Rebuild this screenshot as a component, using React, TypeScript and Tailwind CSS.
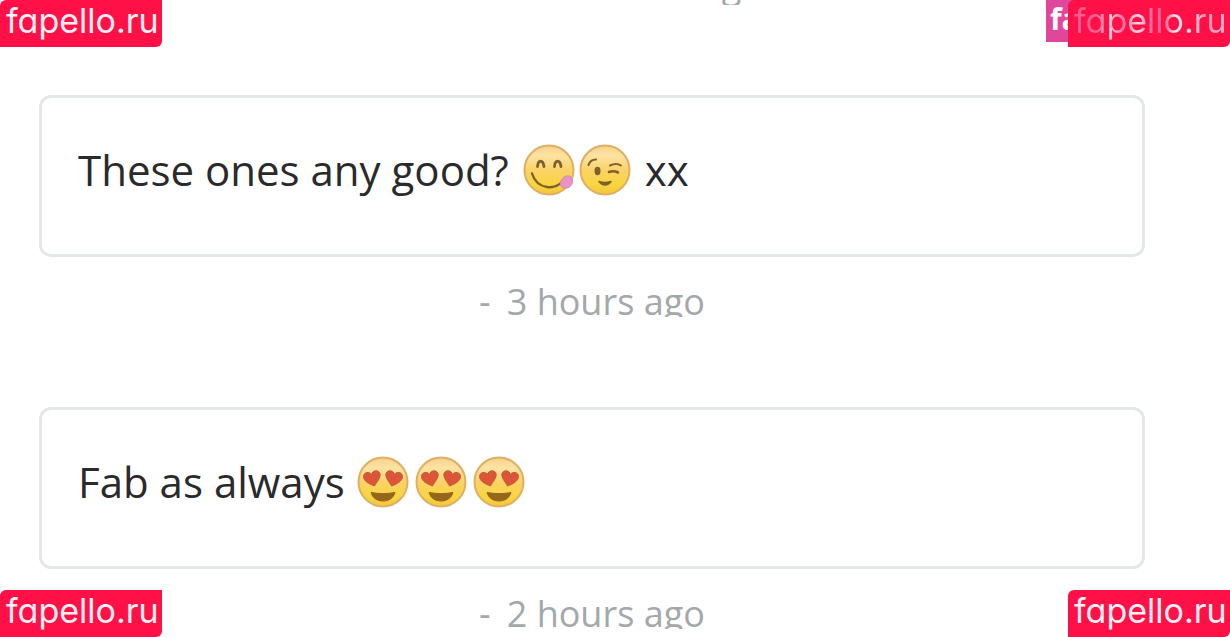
import type { ReactNode } from 'react';

function Face({ id, children }: { id: string; children: ReactNode }) {
  return (
    <svg viewBox="0 0 52 52" className="size-[52px] shrink-0" aria-hidden="true">
      <defs>
        <linearGradient id={id} x1="0" y1="0" x2="0" y2="1">
          <stop offset="0" stopColor="#f6d08a" />
          <stop offset="0.2" stopColor="#fde3a4" />
          <stop offset="0.5" stopColor="#fbd268" />
          <stop offset="0.8" stopColor="#f8d63e" />
          <stop offset="1" stopColor="#f3c440" />
        </linearGradient>
      </defs>
      <circle cx="26" cy="26" r="24.5" fill={`url(#${id})`} stroke="#dfb062" strokeWidth="2" />
      {children}
    </svg>
  );
}

function YumFace() {
  return (
    <Face id="yum">
      <path d="M14.5 22.500c.5-7 5.500-7 6.500 0M31.500 22.500c.5-7 5.500-7 6.500 0" fill="none" stroke="#80602a" strokeWidth="2.800" strokeLinecap="round" />
      <path d="M9 29.500c5 16 24 18 32 6" fill="none" stroke="#80602a" strokeWidth="2.400" strokeLinecap="round" />
      <path d="M38.500 36c2-3 5-5 8-4 4 2 4 8 0 11-4 2-8 1-9-2-.5-2 0-3 1-5z" fill="#e994c6" stroke="#dc86b4" strokeWidth="1" />
    </Face>
  );
}

function WinkFace() {
  return (
    <Face id="wink">
      <path d="M9.500 21c1-3 4-5.500 7.500-5.500" fill="none" stroke="#80602a" strokeWidth="2.200" strokeLinecap="round" />
      <path d="M31 21.500c4-2 8-2 11 0" fill="none" stroke="#80602a" strokeWidth="2" strokeLinecap="round" />
      <ellipse cx="18.500" cy="27" rx="3" ry="4.200" fill="#80602a" />
      <path d="M30 28c3-1 6-1 9 .5" fill="none" stroke="#80602a" strokeWidth="2.600" strokeLinecap="round" />
      <path d="M20 37.500c3 4.500 9 4.500 12 0-4 1.500-8 1.500-12 0z" fill="#80602a" stroke="#80602a" strokeWidth="1.500" strokeLinejoin="round" />
    </Face>
  );
}

function HeartEyesFace({ id }: { id: string }) {
  return (
    <Face id={id}>
      <path d="M17.500 30C12 28 6.500 25 6.500 20.500c0-4.500 6-5.500 8-2 1-4.500 7-5 8.500-1 1 4.500-3.500 8.500-5.500 12.500z" fill="#de5439" stroke="#b5603a" strokeWidth="1" />
      <path d="M34.500 30C40 28 45.500 25 45.500 20.500c0-4.500-6-5.500-8-2-1-4.500-7-5-8.500-1-1 4.500 3.500 8.500 5.500 12.500z" fill="#de5439" stroke="#b5603a" strokeWidth="1" />
      <path d="M14 36.500c8 1.500 16 1.500 24 0-1.500 5.500-6 8.500-12 8.500s-10.500-3-12-8.500z" fill="#95661c" stroke="#95661c" strokeWidth="1" strokeLinejoin="round" />
    </Face>
  );
}

function Message({ time, children }: { time: string; children: ReactNode }) {
  return (
    <article className="mb-[90px]">
      <div className="flex h-[162px] items-center rounded-xl border-3 border-[#e5e8e9] px-9 pb-3 text-[42px] leading-[60px] text-[#2a2a2c]">
        {children}
      </div>
      <p className="flex h-[60px] items-start justify-center gap-4 overflow-hidden pt-5 text-4xl leading-[50px] text-[#a3a8aa]">
        <span>-</span>
        <span>{time}</span>
      </p>
    </article>
  );
}

function Tag({ className, textClassName = 'text-[#ffeef3]' }: { className: string; textClassName?: string }) {
  return (
    <a
      href="#"
      className={`absolute h-[47px] w-[162px] rounded-tl-md rounded-br-md bg-[#ff1046] pl-[6px] font-['Inter',sans-serif] text-[34px] leading-[42px] [font-feature-settings:'cv11'] ${className}`}
    >
      <span className={textClassName}>fapello.ru</span>
    </a>
  );
}

export default function App() {
  return (
    <main className="relative h-screen overflow-hidden bg-white font-['Open_Sans',sans-serif]">
      <div className="mr-[85px] ml-[39px]">
        <p className="mb-[90px] flex h-[5px] items-end justify-center gap-4 overflow-hidden pl-2 text-4xl leading-10 text-[#a3a8aa]">
          <span>-</span>
          <span>about 3 hours ago</span>
        </p>
        <Message time="3 hours ago">
          <span>These ones any good?</span>
          <span className="mr-3.5 ml-3.5 flex gap-1">
            <YumFace />
            <WinkFace />
          </span>
          <span>xx</span>
        </Message>
        <Message time="2 hours ago">
          <span>Fab as always</span>
          <span className="ml-3 flex gap-1.5">
            <HeartEyesFace id="heart-1" />
            <HeartEyesFace id="heart-2" />
            <HeartEyesFace id="heart-3" />
          </span>
        </Message>
      </div>

      <Tag className="top-0 left-0" />
      <div className="absolute top-0 right-0 h-[42px] w-[184px] bg-[#e0479b] pl-1 text-3xl leading-[38px] font-bold text-white">
        fa
      </div>
      <Tag
        className="top-0 right-0"
        textClassName="bg-[linear-gradient(90deg,#ff5c90_0%,#ff5c90_15%,#ffc4d8_24%,#ff6c9c_32%,#ffd8e4_42%,#ff5c90_52%,#ff6c9c_60%,#ffe2eb_66%,#ffd0df_78%,#ff8db0_86%,#ffb4cc_100%)] bg-clip-text text-transparent"
      />
      <Tag className="bottom-0 left-0" />
      <Tag className="right-0 bottom-0" />
    </main>
  );
}
